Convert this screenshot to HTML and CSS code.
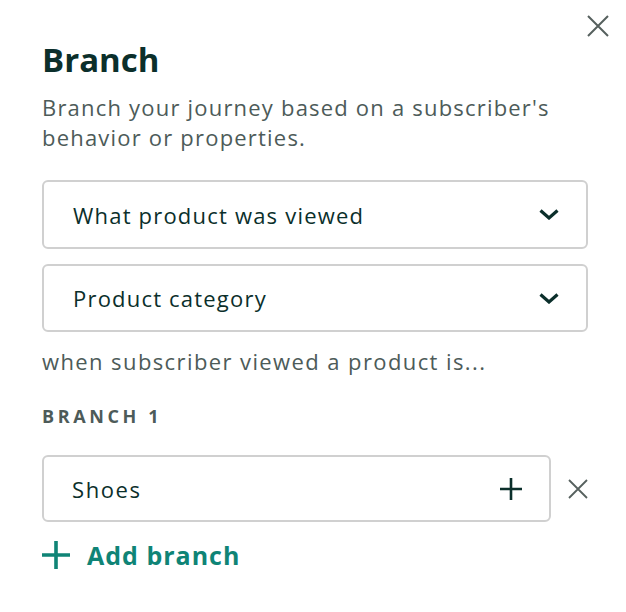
FILE: index.html
```html
<!DOCTYPE html>
<html>
<head>
<meta charset="utf-8">
<link rel="stylesheet" href="styles.css">
</head>
<body>
<div class="panel">
  <button class="close" aria-label="Close">
    <svg width="22" height="22" viewBox="0 0 22 22"><path d="M1 1L21 21M21 1L1 21" stroke="#56605e" stroke-width="2" fill="none"/></svg>
  </button>
  <h1 class="title">Branch</h1>
  <p class="desc">Branch your journey based on a subscriber's behavior or properties.</p>
  <div class="select">
    <span>What product was viewed</span>
    <svg class="chev" width="20" height="11" viewBox="0 0 20 11"><path d="M1.5 1.5L10 9L18.5 1.5" stroke="#0b2f2b" stroke-width="3.2" fill="none"/></svg>
  </div>
  <div class="select">
    <span>Product category</span>
    <svg class="chev" width="20" height="11" viewBox="0 0 20 11"><path d="M1.5 1.5L10 9L18.5 1.5" stroke="#0b2f2b" stroke-width="3.2" fill="none"/></svg>
  </div>
  <p class="when">when subscriber viewed a product is...</p>
  <div class="label">BRANCH 1</div>
  <div class="row">
    <div class="input">
      <span>Shoes</span>
      <svg width="22" height="22" viewBox="0 0 22 22"><path d="M11 0V22M0 11H22" stroke="#0b2f2b" stroke-width="2.6" fill="none"/></svg>
    </div>
    <svg class="remove" width="20" height="20" viewBox="0 0 20 20"><path d="M1 1L19 19M19 1L1 19" stroke="#56605e" stroke-width="1.8" fill="none"/></svg>
  </div>
  <div class="add">
    <svg width="28" height="28" viewBox="0 0 28 28"><path d="M14 0V28M0 14H28" stroke="#0f8476" stroke-width="3.6" fill="none"/></svg>
    <span>Add branch</span>
  </div>
</div>
</body>
</html>
```
FILE: styles.css
```css
html, body {
  margin: 0;
  padding: 0;
  background: #fff;
}
body {
  font-family: "Open Sans", "Liberation Sans", sans-serif;
  width: 626px;
  height: 612px;
}
* {
  box-sizing: border-box;
}
.panel {
  position: relative;
  padding: 38px 38px 0 42px;
}
.close {
  position: absolute;
  top: 15px;
  right: 17px;
  border: 0;
  background: none;
  padding: 0;
  width: 22px;
  height: 22px;
}
.title {
  margin: 0;
  font-size: 33px;
  font-weight: 700;
  color: #0b2f2b;
  line-height: 44px;
}
.desc {
  margin: 10px 0 0;
  font-size: 22px;
  line-height: 30px;
  letter-spacing: 1.2px;
  color: #4d5b59;
  width: 540px;
}
.select {
  margin-top: 28px;
  height: 69px;
  border: 2px solid #d0d0d0;
  border-radius: 6px;
  display: flex;
  align-items: center;
  justify-content: space-between;
  padding: 0 27px 0 29px;
  font-size: 22px;
  letter-spacing: 1.2px;
  color: #0b2f2b;
}
.select + .select {
  margin-top: 15px;
  height: 68px;
}
.when {
  margin: 14px 0 0;
  font-size: 22px;
  line-height: 30px;
  letter-spacing: 1.4px;
  color: #4d5b59;
}
.label {
  margin-top: 28px;
  font-size: 18px;
  font-weight: 700;
  letter-spacing: 3.6px;
  color: #4d5b59;
  line-height: 24px;
}
.row {
  margin-top: 27px;
  display: flex;
  align-items: center;
  gap: 17px;
}
.input {
  width: 509px;
  height: 67px;
  border: 2px solid #d0d0d0;
  border-radius: 6px;
  display: flex;
  align-items: center;
  justify-content: space-between;
  padding: 0 27px 0 28px;
  font-size: 22px;
  letter-spacing: 1.6px;
  color: #0b2f2b;
}
.add {
  margin-top: 16px;
  display: flex;
  align-items: center;
  gap: 17px;
  font-size: 25px;
  font-weight: 700;
  letter-spacing: 1px;
  color: #0f8476;
}
```
